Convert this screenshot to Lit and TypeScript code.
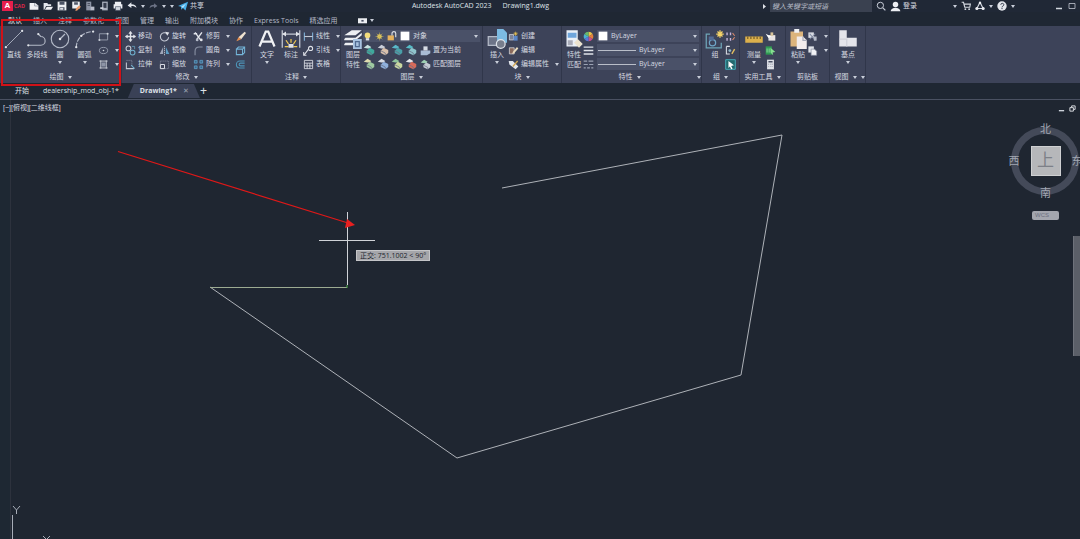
import { LitElement, html, svg, css, nothing, TemplateResult } from "lit";
import { customElement, property, state } from "lit/decorators.js";
import { classMap } from "lit/directives/class-map.js";
import { styleMap } from "lit/directives/style-map.js";

const star = (x: number, y: number, c = "#f0c850") => svg`
  <path d="M${x} ${y - 3}v6M${x - 3} ${y}h6M${x - 2} ${y - 2}l4 4M${x + 2} ${y - 2}l-4 4" stroke=${c} stroke-width="1" fill="none"/>`;

const layerIcon = (body: string, accent: string) => svg`
  <path d="M1 5L6 1l5 3-2 2h-3z" fill=${accent}/>
  <path d="M5 9l4-4 6 3v4l-4 3-6-3z" fill=${body}/>
  <path d="M5 9l6 3v3" fill="none" stroke="#6a7086"/>`;

/* Glyphs share a 16 x 16 grid. */
const ICONS: Record<string, unknown> = {
  line: svg`<path d="M2 14L14 2" stroke="#a2a8b8" stroke-width="0.800" fill="none"/><circle cx="1.500" cy="14.500" r="0.900" fill="#dfe2e8"/><circle cx="14.500" cy="1.500" r="0.900" fill="#dfe2e8"/>`,
  polyline: svg`<path d="M1 13h10a3.500 3.500 0 0 0 0-7L9 4" stroke="#b4bac8" stroke-width="0.900" fill="none"/><circle cx="1" cy="13" r="0.900" fill="#dfe2e8"/><circle cx="9" cy="4" r="0.900" fill="#dfe2e8"/>`,
  circle: svg`<circle cx="8" cy="8" r="7" stroke="#b4bac8" stroke-width="0.900" fill="none"/><path d="M8 8l4-4" stroke="#b4bac8"/><circle cx="8" cy="8" r="1" fill="#dfe2e8"/>`,
  arc: svg`<path d="M1 15C1 8 6 2 15 2" stroke="#b4bac8" stroke-width="0.900" stroke-dasharray="4 1" fill="none"/><circle cx="1" cy="14.500" r="0.900" fill="#dfe2e8"/><circle cx="5" cy="5.500" r="0.900" fill="#dfe2e8"/><circle cx="14.500" cy="2" r="0.900" fill="#dfe2e8"/>`,
  rect: svg`<path d="M2 4h12v9H2z" stroke="#9aa1b2" fill="none" stroke-width="1.300"/><circle cx="2" cy="13" r="1.500" fill="#cdd1da"/><circle cx="14" cy="4" r="1.500" fill="#cdd1da"/>`,
  ellipse: svg`<ellipse cx="8" cy="8" rx="6" ry="4.500" stroke="#9aa1b2" fill="none" stroke-width="1.300"/><circle cx="8" cy="8" r="1.200" fill="#cdd1da"/>`,
  hatch: svg`<path d="M2 3h12M2 13h12M4 2v12M12 2v12" stroke="#cdd1da" fill="none" stroke-width="1.300"/><path d="M5 5h6v6H5z" fill="#8d94a6"/>`,
  move: svg`<path d="M8 1v14M1 8h14" stroke="#dfe2e8" stroke-width="2"/><path d="M8 0l3 4H5zM8 16l3-4H5zM0 8l4-3v6zM16 8l-4-3v6z" fill="#dfe2e8"/>`,
  rotate: svg`<path d="M12 4a6 6 0 1 0 2 5" stroke="#c4c9d4" fill="none" stroke-width="1.600"/><path d="M9 1l6 1-3 5z" fill="#dfe2e8"/>`,
  trim: svg`<path d="M3 2l8 11M13 2L5 13M1 4h5" stroke="#e3e6ec" stroke-width="2"/><circle cx="6" cy="13" r="2" fill="#b4bac8"/><circle cx="12" cy="13" r="2" fill="#e3e6ec"/>`,
  copy: svg`<circle cx="5" cy="5" r="3.500" stroke="#c4c9d4" fill="none" stroke-width="1.500"/><circle cx="11" cy="11" r="3.500" stroke="#6fb1cf" fill="none" stroke-width="1.500"/><path d="M10 2h4v4" stroke="#6fb1cf" fill="none"/>`,
  mirror: svg`<path d="M6 3v10H1z" fill="#9fa6b8"/><path d="M10 3v10h5z" fill="#5e9ec4"/><path d="M8 1v14" stroke="#dfe2e8" stroke-dasharray="2 1"/>`,
  fillet: svg`<path d="M3 15V9c0-4 3-6 6-6h5" stroke="#8a91a4" fill="none" stroke-width="1.600"/>`,
  stretch: svg`<path d="M2 2h8v8" stroke="#8a91a4" fill="none" stroke-dasharray="2 1"/><path d="M2 5v9h11" stroke="#c4c9d4" fill="none" stroke-width="1.500"/><path d="M9 9l5 5" stroke="#6fb1cf" stroke-width="1.500"/>`,
  scale: svg`<path d="M2 3h12v11H2z" stroke="#8a91a4" fill="none" stroke-dasharray="2 1"/><path d="M2 8h6v6H2z" stroke="#dfe2e8" fill="none" stroke-width="1.400"/>`,
  array: svg`<path d="M2 2h4v4H2zM10 2h4v4h-4zM2 10h4v4H2zM10 10h4v4h-4z" stroke="#65a9d2" fill="#3d6b8c"/>`,
  erase: svg`<path d="M14 1l2 2-7 9-4-3z" fill="#f0e3d0"/><path d="M5 9l4 3-7 3z" fill="#e8904e"/>`,
  explode: svg`<path d="M2 6h9v8H2zM2 6l3-3h9v8l-3 3M14 3l-3 3" stroke="#74b4d8" fill="none" stroke-width="1.500"/>`,
  offset: svg`<path d="M14 3H7a5 5 0 0 0 0 10h7M14 6H8a2 2 0 0 0 0 4h6" stroke="#4d94b8" fill="none" stroke-width="1.600"/>`,
  text: svg`<path d="M2 14L7 2h2l5 12M4 10h8" stroke="#f0f1f4" fill="none" stroke-width="1.800"/>`,
  dimension: svg`<path d="M1 1v14M15 1v14M1 4h14" stroke="#c4c9d4" fill="none"/><path d="M1 4l3-2v4zM15 4l-3-2v4z" fill="#dfe2e8"/><path d="M8 8v3M4 9l2 3M12 9l-2 3M3 14h3M10 14h3" stroke="#f0c850"/><path d="M6 12h4v3H6z" fill="#dfe2e8"/>`,
  linear: svg`<path d="M2 2v12M14 2v12" stroke="#7fb0d8" stroke-width="1.600"/><path d="M2 8h12" stroke="#c4c9d4" stroke-width="1.600"/>`,
  leader: svg`<circle cx="11" cy="5" r="3" stroke="#dfe2e8" fill="none" stroke-width="1.500"/><path d="M8 6L2 14M1 10v5h4" stroke="#dfe2e8" fill="none" stroke-width="1.500"/>`,
  table: svg`<path d="M2 2h12v12H2zM2 6h12M2 10h12M6 6v8M10 6v8" stroke="#dfe2e8" fill="none" stroke-width="1.200"/>`,
  layers: svg`<path d="M1 5l6-4h8l-5 4zM1 8l1-1h8l5-4v2L10 9H1zM1 12l1-1h7v2H1z" fill="#eceef2"/><path d="M8 8h7v8H8z" fill="#a9c3e0"/><path d="M10 10h3v4h-3z" stroke="#506a90" fill="none"/>`,
  bulb: svg`<circle cx="8" cy="6" r="5" fill="#f2dc7c"/><path d="M5 11h6v4H5z" fill="#e0e3e8"/>`,
  sun: svg`<circle cx="8" cy="8" r="4" fill="#f0d25a"/><path d="M8 1v14M1 8h14M3 3l10 10M13 3L3 13" stroke="#c8b65c"/>`,
  lock: svg`<path d="M1 7h10v8H1z" fill="#e6b25c"/><path d="M8 7V4a3 3 0 0 1 6 0v6" stroke="#dfe2e8" fill="none" stroke-width="1.800"/>`,
  swatch: svg`<path d="M1 1h14v14H1z" fill="#fff"/>`,
  layerA: layerIcon("#3fa99c", "#c9e2e0"),
  layerB: layerIcon("#d8c0ac", "#c9ced9"),
  layerC: layerIcon("#4a9fa8", "#59b8c9"),
  layerD: layerIcon("#8fc4cc", "#56bcc6"),
  layerE: layerIcon("#c4cad4", "#9ed0b4"),
  layerF: layerIcon("#9ec9a0", "#e0dcb0"),
  layerG: layerIcon("#8fb0dc", "#d8dbe2"),
  layerH: layerIcon("#c9d8a0", "#8fc49c"),
  layerI: layerIcon("#d86a5a", "#e6e6ea"),
  current: svg`<path d="M1 8h14v4l-5 3H1z" fill="#a9bcd4"/><path d="M5 2h6v6H5z" fill="#d6dbe4"/>`,
  insert: svg`<path d="M1 6h9v7H1z" fill="#6d7488" stroke="#b4bac8"/><path d="M8 0h5l3 3v8H8z" fill="#7cbbe2"/><circle cx="11" cy="12" r="3.500" fill="#777d8c" stroke="#dfe2e8"/>`,
  create: svg`<path d="M2 5h6v8H2z" fill="#7c8398" stroke="#dfe2e8"/><path d="M8 7h6v7H8z" fill="#5a86c8"/>${star(11, 4)}`,
  edit: svg`<path d="M2 4h7v9H2z" fill="#8a6a5c" stroke="#dfe2e8"/><path d="M13 3l2 2-6 7-3 1 1-3z" fill="#e9dcc0"/>`,
  attribute: svg`<path d="M1 3h6l8 8-4 4-9-7z" fill="#e3e6ec"/><path d="M14 3L7 11" stroke="#d2a650" stroke-width="2"/>`,
  match: svg`<path d="M2 1h9v13H2z" fill="#eaf0f8"/><path d="M3 3h7v4H3z" fill="#6fa6dc"/><path d="M3 9h4v4H3z" fill="#a8abb8"/><path d="M8 11l3-3 4 4-3 3z" fill="#ece3cf"/>`,
  wheel: svg`<path d="M8 8V1a7 7 0 0 1 6 3.500z" fill="#e8c24a"/><path d="M8 8l6-3.500a7 7 0 0 1 0 7z" fill="#e2803c"/><path d="M8 8l6 3.500A7 7 0 0 1 8 15z" fill="#c8508c"/><path d="M8 8v7a7 7 0 0 1-6-3.500z" fill="#5a78d8"/><path d="M8 8l-6 3.500a7 7 0 0 1 0-7z" fill="#4ab0d0"/><path d="M8 8L2 4.500A7 7 0 0 1 8 1z" fill="#68bc6a"/>`,
  weight: svg`<path d="M1 3h14M1 8h14M1 13h14" stroke="#e0e3e9" stroke-width="2"/>`,
  linetype: svg`<path d="M1 3h5M8 3h7M1 8h6M9 8h6M1 13h3M6 13h4M12 13h3" stroke="#9aa1b2" stroke-width="1.800"/>`,
  group: svg`<path d="M4 4H1v11h12v-4" stroke="#6fa6b8" fill="none"/><circle cx="6" cy="11" r="2.500" stroke="#6fa6c8" fill="none"/><path d="M3 6h4v3H3z" fill="#536a94"/>${star(12, 4, "#f6d468")}`,
  ungroup: svg`<path d="M3 2v4M8 2v4M3 10v4M8 10v4" stroke="#c7b6dc" stroke-width="2"/><path d="M11 3l3 4M11 13l3-4" stroke="#e08c6c" stroke-width="1.500"/>`,
  groupEdit: svg`<path d="M2 2h5M2 2v11h5" stroke="#dfe2e8" fill="none" stroke-width="1.500"/><circle cx="7" cy="8" r="2" fill="#8fb6c8"/><path d="M14 6l-4 7" stroke="#e2be60" stroke-width="2"/>`,
  groupSelect: svg`<path d="M1 1h14v14H1z" fill="#23686e" stroke="#4fd0dc"/><path d="M5 3l8 6-4 1 2 4-2 1-2-4-2 2z" fill="#fff"/>`,
  ruler: svg`<path d="M1 6h14v5H1z" fill="#dcb04c"/><path d="M3 6v2M5.500 6v2M8 6v2M10.500 6v2M13 6v2" stroke="#7a5f28"/>`,
  quick: svg`<path d="M5 6h10v8H5z" fill="#e9e4e4"/><path d="M8 2h4v5H8z" fill="#d8c49a"/><path d="M1 4l8 4-4 2z" fill="#fff"/>`,
  idpoint: svg`<path d="M1 2h9v12H1z" fill="#2f9c52"/><path d="M3 5v6M6 5v6" stroke="#b6f0c2"/><path d="M8 4l7 6-4 1 1 4-4-4z" fill="#86e090"/>`,
  calc: svg`<path d="M3 1h10v14H3z" fill="#dfe2e8"/><path d="M5 3h6v2H5zM5 7h1v1H5zM8 7h1v1H8zM10 7h1v1h-1zM5 10h1v1H5zM8 10h1v1H8zM10 10h1v1h-1z" fill="#4a5064"/>`,
  paste: svg`<path d="M2 2h10v12H2z" fill="#dcb47c"/><path d="M5 0h4v3H5z" fill="#f0f1f4"/><path d="M7 6h5l3 3v7H7z" fill="#f2ecec"/><path d="M12 6v3h3" stroke="#a8abb8" fill="none"/>`,
  cut: svg`<path d="M2 2h8v8H2z" fill="#d8dbe2"/><path d="M4 4l8 10M12 4L4 12" stroke="#7f88a0" stroke-width="1.500"/><path d="M10 8h4v6h-4z" fill="#b6bbc8"/>`,
  clip: svg`<path d="M2 2h8v9H2z" fill="#dfe2e8"/><path d="M6 6h5l3 3v6H6z" fill="#f2f2f5" stroke="#8a90a2"/>`,
  base: svg`<path d="M1 1h6v6h8v7H1z" fill="#e4e4ea"/><path d="M1 8h6v6" stroke="#cfd0d8" fill="none"/>`,
  fileNew: svg`<path d="M1 3h9l5 4v7H1z" fill="#f0f1f4"/><path d="M9 3v5h6" stroke="#7a8090" fill="none"/>`,
  fileOpen: svg`<path d="M1 3h6l1 2h5v3H5l-3 6H1z" fill="#e3e6ec"/><path d="M6 9h10l-3 5H3z" fill="#f0f1f4"/>`,
  save: svg`<path d="M1 1h14v14H1z" fill="#eceef2"/><path d="M4 1h8v5H4zM4 10h8v5H4z" fill="#4a5264"/><path d="M5 11h5v3H5z" fill="#e0e3e8"/>`,
  saveAs: svg`<path d="M2 1h12v11H2z" fill="#eceef2"/><path d="M5 2h6v4H5z" fill="#515869"/><path d="M13 7l3 2-6 6-3 1 1-4z" fill="#e69a6a"/>`,
  web: svg`<path d="M2 1h8v14H2z" fill="#8c93a4"/><path d="M4 4h4M4 7h4" stroke="#2a303e"/><path d="M9 9h6v6H9z" fill="#b8bdca"/>`,
  mobile: svg`<path d="M5 1h9v14H5z" fill="#aab0be"/><path d="M7 3h5v8H7z" fill="#353c4c"/><path d="M2 10h5v3H2z" fill="#cfd3dc"/>`,
  print: svg`<path d="M3 1h10v4H3zM1 5h14v7H1z" fill="#eceef2"/><path d="M4 9h8v6H4z" fill="#d3d8e0" stroke="#4a5264"/>`,
  undo: svg`<path d="M1 7l6-5v3c5 0 8 2 8 6-2-2-4-3-8-3v3z" fill="#e3e6ec"/>`,
  redo: svg`<path d="M15 7L9 2v3C4 5 1 7 1 11c2-2 4-3 8-3v3z" fill="#6c7386"/>`,
  send: svg`<path d="M0 8L16 1l-4 14-4-4-3 3V9z" fill="#48b0ea"/><path d="M5 9l8-5-5 7" fill="#b9e2fa"/>`,
  search: svg`<circle cx="7" cy="7" r="5" stroke="#c9ced9" fill="none" stroke-width="1.600"/><path d="M11 11l4 4" stroke="#c9ced9" stroke-width="2"/>`,
  user: svg`<circle cx="8" cy="5" r="4" fill="#eceef2"/><path d="M1 15c0-7 14-7 14 0z" fill="#eceef2"/>`,
  cart: svg`<path d="M1 2h3l2 8h8l1-5H5" stroke="#d3d8e0" fill="none" stroke-width="1.800"/><circle cx="7" cy="13" r="1.500" fill="#d3d8e0"/><circle cx="13" cy="13" r="1.500" fill="#d3d8e0"/>`,
  cloud: svg`<path d="M8 2l5 10H3z" stroke="#d3d8e0" fill="none" stroke-width="1.800"/><circle cx="8" cy="3" r="2" fill="#eceef2"/><circle cx="3" cy="12" r="2.500" fill="#eceef2"/><circle cx="13" cy="12" r="2.500" fill="#eceef2"/>`,
  help: svg`<circle cx="8" cy="8" r="7.500" fill="#e3e6ec"/><path d="M6 6c0-3 5-3 5 0 0 2-3 2-3 4M8 11v2" stroke="#353c4c" fill="none" stroke-width="1.600"/>`,
  minimize: svg`<path d="M2 13h12" stroke="#d3d8e0" stroke-width="3"/>`,
  maximize: svg`<path d="M2 3h12v10H2z" stroke="#c9ced9" fill="none" stroke-width="1.500"/>`,
  restore: svg`<path d="M2 6h8v8H2z" stroke="#eceef2" fill="none" stroke-width="2"/><path d="M6 5V2h8v8h-3" stroke="#eceef2" fill="none" stroke-width="2"/>`,
  display: svg`<path d="M0 4h16v9H0z" fill="#eceef2"/><path d="M6 7h4v3H6z" fill="#4a5064"/>`,
};

const icon = (name: string, size = 12) =>
  html`<svg class="icon" width=${size} height=${size} viewBox="0 0 16 16" aria-hidden="true">${ICONS[name]}</svg>`;

const caret = html`<svg class="caret" width="4" height="3" viewBox="0 0 4 3" aria-hidden="true"><path d="M0 0h4L2 3z" fill="#c9ced9"/></svg>`;

const sharedStyles = css`
  * { box-sizing: border-box; }
  button, select, input, a {
    font: inherit; color: inherit; background: none; border: 0; margin: 0; padding: 0;
    white-space: nowrap; text-decoration: none; border-radius: 0; outline: none;
  }
  .icon, .caret { display: block; flex: none; }
`;

interface Tool { icon: string; label?: string; second?: string; menu?: boolean; width?: number; size?: number; }

@customElement("ribbon-panel")
class RibbonPanel extends LitElement {
  @property() label = "";
  @property({ type: Boolean }) menu = false;
  @property({ type: Boolean }) launcher = false;
  static styles = [sharedStyles, css`
    :host { display: flex; flex-direction: column; flex: none; border-right: 1px solid #30364a; }
    .body { display: flex; flex: 1; padding: 3px 2px 0 3px; }
    .foot { display: flex; align-items: center; height: 13px; }
    .name { display: flex; flex: 1; align-items: center; justify-content: center; gap: 4px; }
  `];
  render() {
    return html`
      <div class="body"><slot></slot></div>
      <div class="foot">
        <button class="name">${this.label}${this.menu ? caret : nothing}</button>
        ${this.launcher ? caret : nothing}
      </div>`;
  }
}

@customElement("app-root")
class AppRoot extends LitElement {
  @state() private ribbonTab = "默认";

  static styles = [sharedStyles, css`
    :host {
      display: flex; flex-direction: column; height: 100vh; min-height: 320px; overflow: hidden;
      background: #1f2733; color: #d6d9e0;
      font-family: "Liberation Sans", "Noto Sans CJK SC", sans-serif; font-size: 7px; line-height: 10px;
    }
    .titlebar { display: flex; align-items: center; height: 12px; flex: none; padding: 0 4px 0 2px; background: #202836; }
    .side { display: flex; align-items: center; gap: 4px; }
    .side.left { flex: 7 1 0; }
    .side.right { flex: 9 1 0; justify-content: flex-end; }
    .brand { display: flex; align-items: center; gap: 1px; width: 23px; color: #e0264a; font-size: 5px; font-weight: bold; }
    .logo { width: 11px; line-height: 10px; text-align: center; background: #e51f4c; color: #fff; font-size: 8px; }
    .share { display: flex; align-items: center; gap: 2px; }
    .doc-title { display: flex; gap: 11px; font-family: "Open Sans", sans-serif; color: #dfe2e8; }
    .search { width: 102px; height: 12px; padding: 0 2px; background: #3a4150; font-style: italic; }
    .search::placeholder { color: #b9bec9; opacity: 1; }
    .account { display: flex; align-items: center; gap: 2px; margin-right: 32px; }
    .services { display: flex; align-items: center; gap: 4px; margin-right: 36px; }
    .window { display: flex; gap: 5px; }

    .tabs { display: flex; align-items: center; gap: 11px; height: 14px; flex: none; padding: 3px 8px 0; color: #b4b9c6; }
    .tabs .wide { font-family: "Open Sans", sans-serif; }
    .tabs .on { color: #e3e6ec; }
    .view-toggle { display: flex; align-items: center; gap: 3px; margin-left: 9px; }

    .ribbon { display: flex; flex: none; height: 57px; background: #3d4359; }
    .big { display: flex; flex-direction: column; align-items: center; height: 42px; }
    .big .icon { margin-bottom: 1px; }
    .big .caret { margin-top: 1px; }
    .grid { display: grid; grid-template-rows: repeat(3, 14px); align-content: start; }
    .small { display: flex; align-items: center; gap: 2px; }
    .small .caret { margin-left: 4px; }
    .row { display: flex; align-items: center; gap: 2px; }
    .row .small { margin-left: 1px; }
    .layer-grid { width: 118px; padding-left: 1px; }
    .combo { display: flex; align-items: center; gap: 3px; height: 12px; align-self: center; padding-right: 2px; background: #4a5168; }
    .combo select { flex: 1; min-width: 0; appearance: none; height: 12px; line-height: 12px; }
    .props { width: 102px; }
    .props .combo { padding-left: 1px; font-family: "Open Sans", sans-serif; }
    .stroke { width: 38px; height: 1px; background: #b9bec9; }

    .doc-tabs { display: flex; align-items: stretch; height: 17px; flex: none; padding-left: 15px; border-bottom: 1px solid #4a5162; color: #dfe2e8; }
    .doc-tabs button { display: flex; align-items: center; }
    .latin { font-family: "Open Sans", sans-serif; }
    .start { margin-right: 14px; }
    .doc-tabs .current { gap: 6px; margin: 1px 0 1px 9px; padding: 0 11px 0 12px; background: #3a4156; font-weight: bold; clip-path: polygon(6px 0, calc(100% - 6px) 0, 100% 100%, 0 100%); }
    .close { font-weight: normal; color: #9aa1b2; }
    .doc-tabs .add { font-size: 12px; }

    .canvas { position: relative; flex: 1; min-height: 0; overflow: hidden; background: #1f2631; }
    .edge { position: absolute; left: 0; top: 0; bottom: 0; width: 11px; border-right: 1px solid #2d323d; background: #1e2833; }
    .drawing { position: absolute; left: 0; top: 0; width: 100%; height: 100%; }
    .view-label { position: absolute; left: 3px; top: 3px; }
    .canvas-window { position: absolute; right: 4px; top: 5px; display: flex; gap: 4px; }
    .tooltip { position: absolute; left: 356px; top: 150px; padding: 0 3px; border: 1px solid #c4c5c8; background: #a5a6aa; color: #20242c; line-height: 9px; font-family: "Open Sans", "Noto Sans CJK SC", sans-serif; white-space: nowrap; }
    .cube { position: absolute; right: -3px; top: 22px; width: 75px; height: 78px; display: grid; grid-template: 14px 1fr 14px / 12px 1fr 12px; place-items: center; color: #a2a7b2; font-size: 11px; line-height: 14px; }
    .ring { position: absolute; left: 3px; top: 5px; width: 68px; height: 68px; border: 7px solid #444a59; border-radius: 50%; }
    .cube button { position: relative; }
    .cube .n { grid-area: 1 / 2; }
    .cube .w { grid-area: 2 / 1; }
    .cube .e { grid-area: 2 / 3; }
    .cube .s { grid-area: 3 / 2; }
    .cube .top { grid-area: 2 / 2; width: 30px; height: 30px; background: #b6b7ba; border: 1px solid #cfd0d2; color: #7d8088; font-size: 17px; }
    .wcs { position: absolute; right: 21px; top: 111px; width: 27px; height: 9px; padding-left: 3px; border-radius: 2px; background: #a3a6ae; color: #6b7080; font-size: 6px; line-height: 9px; text-align: left; }
    .nav { position: absolute; right: 0; top: 136px; width: 7px; height: 120px; background: #5b5f68; border-left: 1px solid #6e727b; }
    .highlight { position: absolute; left: 1px; top: 19px; width: 120px; height: 67px; border: 2px solid #d01218; pointer-events: none; }
  `];

  private big(t: Tool): TemplateResult {
    return html`<button class="big" style=${styleMap({ width: `${t.width ?? 22}px` })}>
      ${icon(t.icon, t.size ?? 20)}<span>${t.label}</span>
      ${t.second ? html`<span>${t.second}</span>` : nothing}${t.menu ? caret : nothing}
    </button>`;
  }

  private small(t: Tool): TemplateResult {
    return html`<button class="small" aria-label=${t.label ?? t.icon}>${icon(t.icon, 11)}${t.label ? html`<span>${t.label}</span>` : nothing}${t.menu ? caret : nothing}</button>`;
  }

  private column(tools: Tool[], width: number): TemplateResult {
    return html`<div class="grid" style=${styleMap({ width: `${width}px` })}>${tools.map((t) => this.small(t))}</div>`;
  }

  private layerRow(names: string[], last: Tool): TemplateResult {
    return html`<div class="row">${names.map((n) => html`<button aria-label="图层工具">${icon(n, 12)}</button>`)}${this.small(last)}</div>`;
  }

  private bylayer(label: string, lead: TemplateResult): TemplateResult {
    return html`<label class="combo">${lead}<select aria-label=${label}><option>ByLayer</option></select>${caret}</label>`;
  }

  private renderTitlebar() {
    const quick = ["fileNew", "fileOpen", "save", "saveAs", "web", "mobile", "print"];
    return html`<header class="titlebar">
      <div class="side left">
        <button class="brand"><span class="logo">A</span>CAD</button>
        ${quick.map((n) => html`<button aria-label=${n}>${icon(n, 10)}</button>`)}
        <button aria-label="undo">${icon("undo", 10)}</button>${caret}
        <button aria-label="redo">${icon("redo", 9)}</button>${caret}${caret}
        <button class="share">${icon("send", 10)}共享</button>
      </div>
      <div class="doc-title"><span>Autodesk AutoCAD 2023</span><span>Drawing1.dwg</span></div>
      <div class="side right">
        <svg class="icon" width="3" height="5" viewBox="0 0 3 5"><path d="M0 0l3 2.500L0 5z" fill="#dfe2e8"/></svg>
        <input class="search" aria-label="搜索" placeholder="键入关键字或短语" />
        <button aria-label="搜索">${icon("search", 10)}</button>
        <button class="account">${icon("user", 11)}登录</button>
        <div class="services">
          ${caret}<button aria-label="cart">${icon("cart", 10)}</button>
          <button aria-label="cloud">${icon("cloud", 10)}</button>${caret}
          <button aria-label="help">${icon("help", 10)}</button>${caret}
        </div>
        <div class="window">
          <button aria-label="minimize">${icon("minimize", 8)}</button>
          <button aria-label="maximize">${icon("maximize", 8)}</button>
        </div>
      </div>
    </header>`;
  }

  private renderTabs() {
    const tabs = ["默认", "插入", "注释", "参数化", "视图", "管理", "输出", "附加模块", "协作", "Express Tools", "精选应用"];
    return html`<nav class="tabs">
      ${tabs.map((t) => html`<button class=${classMap({ on: t === this.ribbonTab, wide: t.startsWith("E") })} @click=${() => (this.ribbonTab = t)}>${t}</button>`)}
      <button class="view-toggle" aria-label="显示">${icon("display", 9)}${caret}</button>
    </nav>`;
  }

  private renderRibbon() {
    return html`<div class="ribbon">
      <ribbon-panel label="绘图" menu>
        ${this.big({ icon: "line", label: "直线" })}
        ${this.big({ icon: "polyline", label: "多段线", width: 24 })}
        ${this.big({ icon: "circle", label: "圆", menu: true })}
        ${this.big({ icon: "arc", label: "圆弧", menu: true, width: 27 })}
        ${this.column([{ icon: "rect", menu: true }, { icon: "ellipse", menu: true }, { icon: "hatch", menu: true }], 21)}
      </ribbon-panel>
      <ribbon-panel label="修改" menu>
        ${this.column([{ icon: "move", label: "移动" }, { icon: "copy", label: "复制" }, { icon: "stretch", label: "拉伸" }], 34)}
        ${this.column([{ icon: "rotate", label: "旋转" }, { icon: "mirror", label: "镜像" }, { icon: "scale", label: "缩放" }], 34)}
        ${this.column([{ icon: "trim", label: "修剪", menu: true }, { icon: "fillet", label: "圆角", menu: true }, { icon: "array", label: "阵列", menu: true }], 42)}
        ${this.column([{ icon: "erase" }, { icon: "explode" }, { icon: "offset" }], 14)}
      </ribbon-panel>
      <ribbon-panel label="注释" menu>
        ${this.big({ icon: "text", label: "文字", menu: true, width: 24 })}
        ${this.big({ icon: "dimension", label: "标注", width: 24 })}
        ${this.column([{ icon: "linear", label: "线性", menu: true }, { icon: "leader", label: "引线", menu: true }, { icon: "table", label: "表格" }], 35)}
      </ribbon-panel>
      <ribbon-panel label="图层" menu>
        ${this.big({ icon: "layers", label: "图层", second: "特性", width: 18 })}
        <div class="grid layer-grid">
          <label class="combo">${icon("bulb", 9)}${icon("sun", 9)}${icon("lock", 10)}${icon("swatch", 10)}
            <select aria-label="图层"><option>对象</option></select>${caret}</label>
          ${this.layerRow(["layerA", "layerB", "layerC", "layerD"], { icon: "current", label: "置为当前" })}
          ${this.layerRow(["layerF", "layerG", "layerH", "layerI"], { icon: "layerE", label: "匹配图层" })}
        </div>
      </ribbon-panel>
      <ribbon-panel label="块" menu>
        ${this.big({ icon: "insert", label: "插入", menu: true, width: 22 })}
        ${this.column([{ icon: "create", label: "创建" }, { icon: "edit", label: "编辑" }, { icon: "attribute", label: "编辑属性", menu: true }], 51)}
      </ribbon-panel>
      <ribbon-panel label="特性" menu launcher>
        ${this.big({ icon: "match", label: "特性", second: "匹配", width: 18 })}
        ${this.column([{ icon: "wheel" }, { icon: "weight" }, { icon: "linetype" }], 14)}
        <div class="grid props">
          ${this.bylayer("颜色", icon("swatch", 10))}
          ${this.bylayer("线宽", html`<span class="stroke"></span>`)}
          ${this.bylayer("线型", html`<span class="stroke"></span>`)}
        </div>
      </ribbon-panel>
      <ribbon-panel label="组" menu>
        ${this.big({ icon: "group", label: "组", width: 20 })}
        ${this.column([{ icon: "ungroup" }, { icon: "groupEdit" }, { icon: "groupSelect" }], 12)}
      </ribbon-panel>
      <ribbon-panel label="实用工具" menu>
        ${this.big({ icon: "ruler", label: "测量", menu: true })}
        ${this.column([{ icon: "quick" }, { icon: "idpoint" }, { icon: "calc" }], 18)}
      </ribbon-panel>
      <ribbon-panel label="剪贴板">
        ${this.big({ icon: "paste", label: "粘贴", menu: true, width: 18 })}
        ${this.column([{ icon: "cut", menu: true }, { icon: "clip", menu: true }], 20)}
      </ribbon-panel>
      <ribbon-panel label="视图" menu launcher>
        ${this.big({ icon: "base", label: "基点", menu: true, width: 30 })}
      </ribbon-panel>
    </div>`;
  }

  private renderCanvas() {
    return html`<main class="canvas">
      <div class="edge"></div>
      <svg class="drawing" aria-hidden="true">
        <g fill="none" stroke="#aeb2b8" stroke-width="1">
          <path d="M502 88L782 35L741 275L457 358L210 187"/>
          <path d="M210 187.500H347" stroke="#9cab92"/>
          <path d="M347.500 112V185M319 140.500H375" stroke="#d0d3d8"/>
          <path d="M12.500 415V460" stroke="#a8adb8"/>
          <path d="M13 406l3.500 4 3.500-4M16.500 410v4M43 436l7 7M50 436l-7 7" stroke="#a8adb8"/>
        </g>
        <path d="M347 185v3" stroke="#4fae4a"/>
        <path d="M118 51.500L348 123" stroke="#e01818" stroke-width="1.200" fill="none"/>
        <path d="M355 125l-10 3 2-9z" fill="#e82020"/>
      </svg>
      <div class="view-label">[−][俯视][二维线框]</div>
      <div class="canvas-window">
        <button aria-label="minimize view">${icon("minimize", 7)}</button>
        <button aria-label="restore view">${icon("restore", 7)}</button>
      </div>
      <output class="tooltip">正交: 751.1002 &lt; 90°</output>
      <div class="cube">
        <div class="ring"></div>
        <button class="n">北</button><button class="w">西</button>
        <button class="top">上</button>
        <button class="e">东</button><button class="s">南</button>
      </div>
      <button class="wcs">WCS</button>
      <div class="nav"></div>
    </main>`;
  }

  render() {
    return html`
      ${this.renderTitlebar()}${this.renderTabs()}${this.renderRibbon()}
      <nav class="doc-tabs">
        <button class="start">开始</button>
        <button class="latin">dealership_mod_obj-1*</button>
        <button class="latin current">Drawing1*<span class="close">✕</span></button>
        <button class="add" aria-label="新建">+</button>
      </nav>
      ${this.renderCanvas()}
      <div class="highlight"></div>`;
  }
}
